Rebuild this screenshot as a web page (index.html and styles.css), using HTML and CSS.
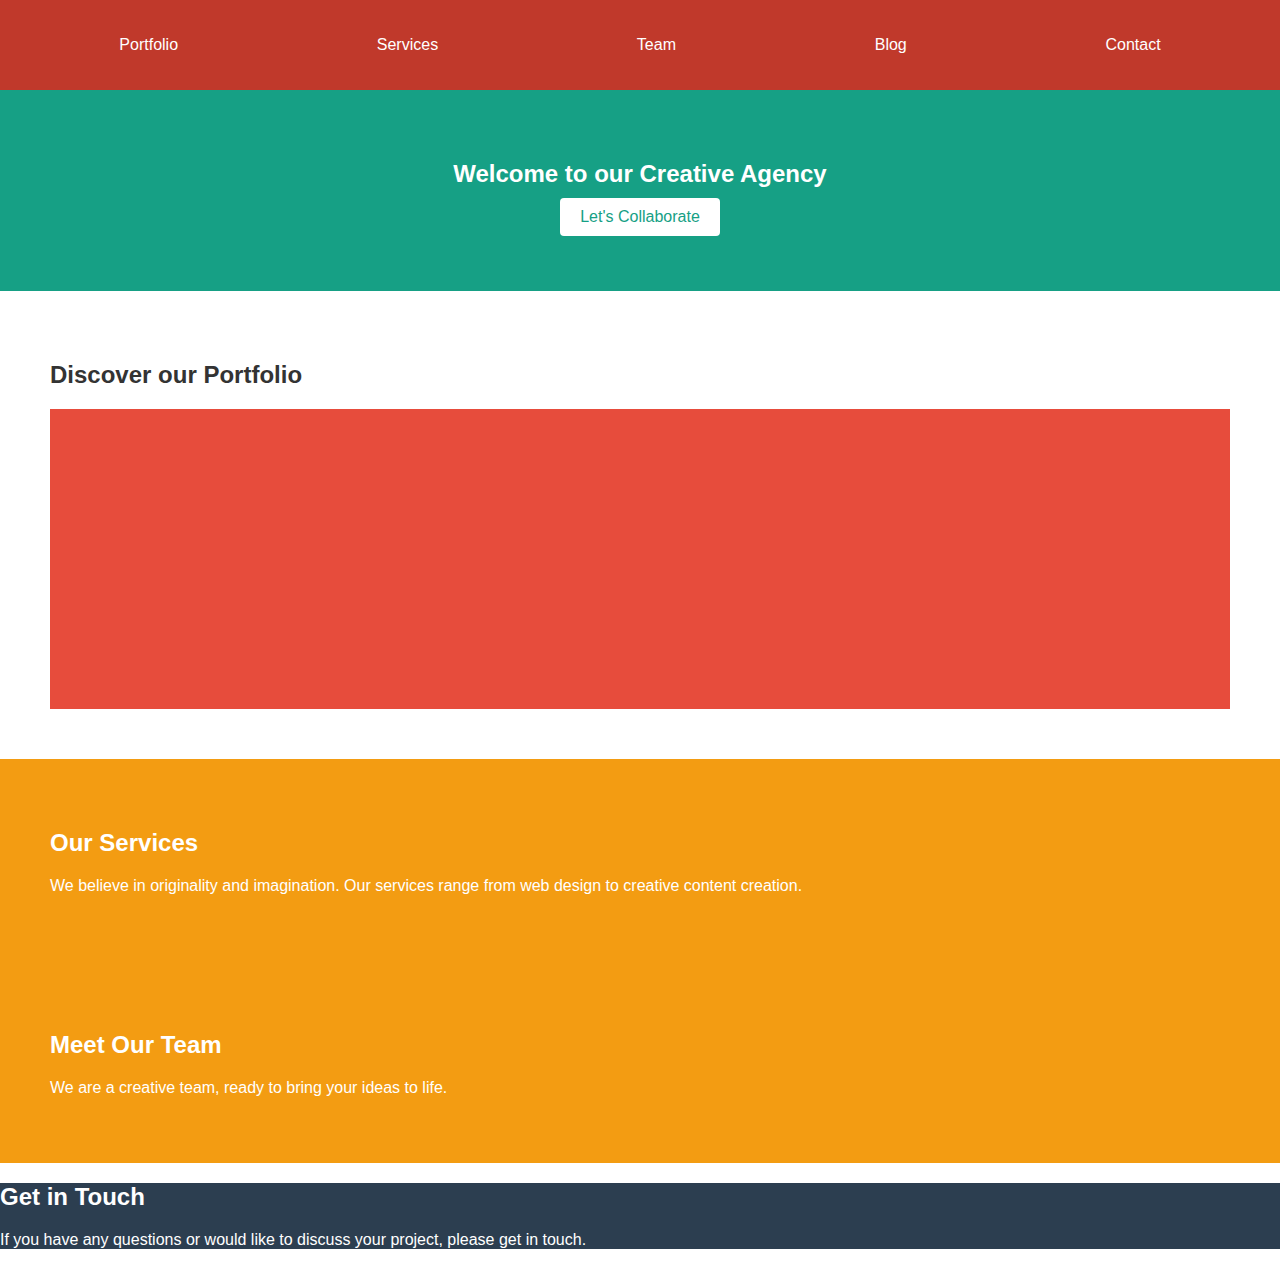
FILE: index.html
```html
<!DOCTYPE html>
<html lang="en">
<head>
<meta charset="utf-8">
<title>Creative Agency</title>
<link rel="stylesheet" href="styles.css">
</head>
<body>
<nav class="nav">
  <ul class="nav-list">
    <li><a href="#portfolio">Portfolio</a></li>
    <li><a href="#services">Services</a></li>
    <li><a href="#team">Team</a></li>
    <li><a href="#blog">Blog</a></li>
    <li><a href="#contact">Contact</a></li>
  </ul>
</nav>
<header class="hero">
  <h2 class="hero-title">Welcome to our Creative Agency</h2>
  <a class="hero-btn" href="#contact">Let's Collaborate</a>
</header>
<section class="section portfolio" id="portfolio">
  <h2>Discover our Portfolio</h2>
  <div class="portfolio-box"></div>
</section>
<section class="section orange" id="services">
  <h2>Our Services</h2>
  <p>We believe in originality and imagination. Our services range from web design to creative content creation.</p>
</section>
<section class="section orange" id="team">
  <h2>Meet Our Team</h2>
  <p>We are a creative team, ready to bring your ideas to life.</p>
</section>
<footer class="footer" id="contact">
  <h2>Get in Touch</h2>
  <p>If you have any questions or would like to discuss your project, please get in touch.</p>
</footer>
</body>
</html>
```

FILE: styles.css
```css
body {
  margin: 0;
  font-family: "Liberation Sans", Arial, Helvetica, sans-serif;
  font-size: 16px;
  color: #333;
  background: #fff;
}

h2 {
  font-size: 24px;
  margin: 20px 0;
}

p {
  margin: 16px 0;
}

.nav {
  background: #c0392b;
  padding: 20px;
}

.nav-list {
  list-style: none;
  margin: 16px 0;
  padding: 0;
  display: flex;
  justify-content: space-around;
}

.nav-list a {
  color: #fff;
  text-decoration: none;
}

.hero {
  background: #16a085;
  color: #fff;
  text-align: center;
  padding: 50px 0 55px;
}

.hero-title {
  margin: 20px 0 10px;
}

.hero-btn {
  display: inline-block;
  background: #fff;
  color: #16a085;
  text-decoration: none;
  padding: 10px 20px;
  border-radius: 4px;
}

.section {
  padding: 50px;
}

.portfolio h2 {
  color: #333;
}

.portfolio-box {
  height: 300px;
  background: #e74c3c;
}

.orange {
  background: #f39c12;
  color: #fff;
}

.footer {
  background: #2c3e50;
  color: #fff;
}
```
